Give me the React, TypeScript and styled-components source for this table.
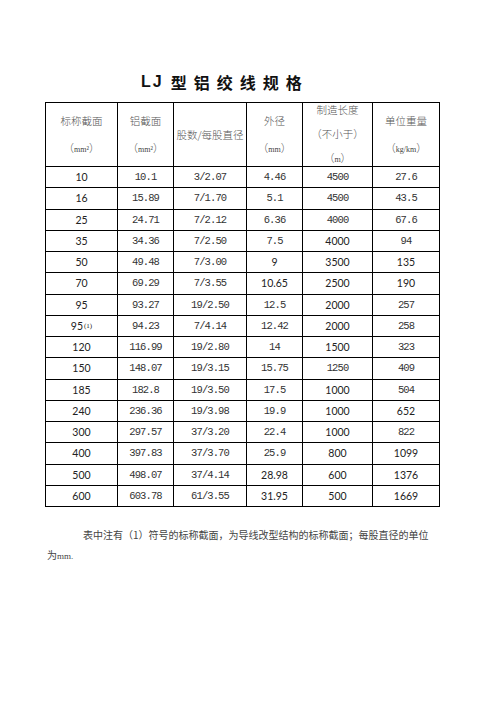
import React from "react";
import styled, { createGlobalStyle } from "styled-components";

const GlobalStyle = createGlobalStyle`
  html, body {
    margin: 0;
    padding: 0;
    background: #ffffff;
  }
`;

const Page = styled.div`
  width: 496px;
  min-height: 702px;
  padding-top: 72px;
  box-sizing: border-box;
  font-family: "Noto Sans CJK SC", sans-serif;
`;

const Title = styled.h1`
  display: flex;
  align-items: center;
  gap: 7px;
  height: 20px;
  margin: 0 0 10px 0;
  padding-left: 141px;
  font-size: 16px;
  font-weight: 700;
  color: #111;
`;

const TitleLatin = styled.span`
  letter-spacing: 2px;
  font-family: "Liberation Sans", "Noto Sans CJK SC", sans-serif;
  font-weight: 700;
`;

const Grid = styled.div`
  display: grid;
  grid-template-columns: 72px 56px 73px 56px 70px 67px;
  grid-template-rows: 64px;
  grid-auto-rows: 21.25px;
  width: max-content;
  margin-left: 45px;
  border-top: 1px solid #000;
  border-left: 1px solid #000;
`;

const HeadCell = styled.div<{ $lh: number }>`
  display: flex;
  flex-direction: column;
  align-items: center;
  justify-content: center;
  border-right: 1px solid #000;
  border-bottom: 1px solid #000;
  font-size: 10.5px;
  line-height: ${(p) => p.$lh}px;
  font-weight: 300;
  color: #555;
  white-space: nowrap;
`;

const Unit = styled.span`
  font-family: "Liberation Serif", serif;
  font-size: 8px;
  color: #444;
`;

const Cell = styled.div<{ $sans: boolean }>`
  display: flex;
  align-items: center;
  justify-content: center;
  border-right: 1px solid #000;
  border-bottom: 1px solid #000;
  font-family: ${(p) =>
    p.$sans ? `"Lato", "Liberation Sans", sans-serif` : `"Liberation Mono", monospace`};
  font-size: ${(p) => (p.$sans ? "10.5px" : "10.5px")};
  letter-spacing: ${(p) => (p.$sans ? "0" : "-0.9px")};
  color: ${(p) => (p.$sans ? "#222" : "#333")};
  white-space: nowrap;
`;

const Sup = styled.sup`
  font-family: "Liberation Serif", serif;
  font-size: 7px;
  letter-spacing: 0;
  margin-left: 1px;
`;

const Note = styled.p`
  margin: 18px 0 0 47px;
  width: 390px;
  font-size: 10px;
  line-height: 20px;
  color: #444;
  text-indent: 36px;
`;

const NoteLatin = styled.span`
  font-family: "Liberation Serif", serif;
  font-size: 9px;
`;

// flag per cell: s = sans, m = mono
const rows: { v: string[]; f: string }[] = [
  { v: ["10", "10.1", "3/2.07", "4.46", "4500", "27.6"], f: "smmmmm" },
  { v: ["16", "15.89", "7/1.70", "5.1", "4500", "43.5"], f: "smmmmm" },
  { v: ["25", "24.71", "7/2.12", "6.36", "4000", "67.6"], f: "smmmmm" },
  { v: ["35", "34.36", "7/2.50", "7.5", "4000", "94"], f: "smmmsm" },
  { v: ["50", "49.48", "7/3.00", "9", "3500", "135"], f: "smmsss" },
  { v: ["70", "69.29", "7/3.55", "10.65", "2500", "190"], f: "smmsss" },
  { v: ["95", "93.27", "19/2.50", "12.5", "2000", "257"], f: "smmmsm" },
  { v: ["95", "94.23", "7/4.14", "12.42", "2000", "258"], f: "smmmsm" },
  { v: ["120", "116.99", "19/2.80", "14", "1500", "323"], f: "smmmsm" },
  { v: ["150", "148.07", "19/3.15", "15.75", "1250", "409"], f: "smmmmm" },
  { v: ["185", "182.8", "19/3.50", "17.5", "1000", "504"], f: "smmmsm" },
  { v: ["240", "236.36", "19/3.98", "19.9", "1000", "652"], f: "smmmss" },
  { v: ["300", "297.57", "37/3.20", "22.4", "1000", "822"], f: "smmmsm" },
  { v: ["400", "397.83", "37/3.70", "25.9", "800", "1099"], f: "smmmss" },
  { v: ["500", "498.07", "37/4.14", "28.98", "600", "1376"], f: "smmsss" },
  { v: ["600", "603.78", "61/3.55", "31.95", "500", "1669"], f: "smmsss" },
];

export default function App() {
  return (
    <Page>
      <GlobalStyle />
      <Title>
        <TitleLatin>LJ</TitleLatin>
        {"型铝绞线规格".split("").map((c) => (
          <span key={c}>{c}</span>
        ))}
      </Title>

      <Grid>
        <HeadCell $lh={27}>
          <span>标称截面</span>
          <span>
            （<Unit>mm²</Unit>）
          </span>
        </HeadCell>
        <HeadCell $lh={27}>
          <span>铝截面</span>
          <span>
            （<Unit>mm²</Unit>）
          </span>
        </HeadCell>
        <HeadCell $lh={27}>
          <span>股数/每股直径</span>
        </HeadCell>
        <HeadCell $lh={27}>
          <span>外径</span>
          <span>
            （<Unit>mm</Unit>）
          </span>
        </HeadCell>
        <HeadCell $lh={24}>
          <span>制造长度</span>
          <span>（不小于）</span>
          <span>
            （<Unit>m</Unit>）
          </span>
        </HeadCell>
        <HeadCell $lh={27}>
          <span>单位重量</span>
          <span>
            （<Unit>kg/km</Unit>）
          </span>
        </HeadCell>

        {rows.map((row, r) =>
          row.v.map((val, c) => (
            <Cell key={`${r}-${c}`} $sans={row.f[c] === "s"}>
              {val}
              {r === 7 && c === 0 && <Sup>(1)</Sup>}
            </Cell>
          ))
        )}
      </Grid>

      <Note>
        表中注有（1）符号的标称截面，为导线改型结构的标称截面；每股直径的单位
        <br />
        为<NoteLatin>mm.</NoteLatin>
      </Note>
    </Page>
  );
}
